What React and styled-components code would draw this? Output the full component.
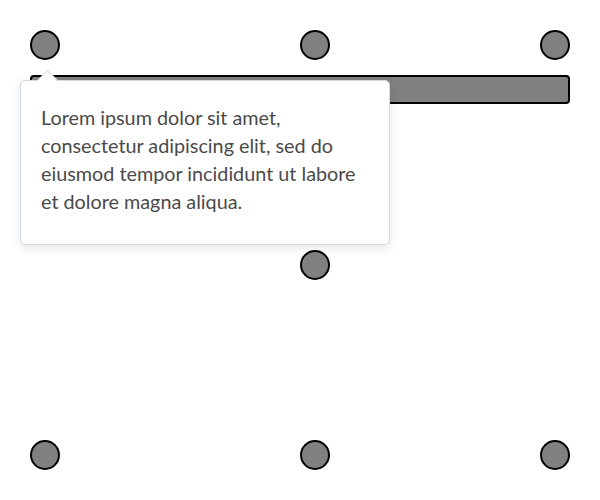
import styled, { createGlobalStyle } from "styled-components";

const GlobalStyle = createGlobalStyle`
  html, body {
    margin: 0;
    padding: 0;
    background: #ffffff;
  }
  body {
    font-family: Lato, "Noto Sans", sans-serif;
  }
`;

const Page = styled.div`
  padding: 30px;
  width: 600px;
  height: 500px;
  box-sizing: border-box;
`;

// free canvas: anchors sit at the corners, edges and middle
const Canvas = styled.div`
  position: relative;
  width: 540px;
  height: 440px;
`;

const Dot = styled.div`
  position: absolute;
  width: 30px;
  height: 30px;
  box-sizing: border-box;
  border: 2px solid #000;
  border-radius: 50%;
  background: #808080;
  left: ${(p) => p.$x};
  top: ${(p) => p.$y};
`;

const Bar = styled.div`
  position: relative;
  top: 45px;
  height: 29px;
  box-sizing: border-box;
  border: 2px solid #000;
  border-radius: 4px;
  background: #808080;
`;

const Tooltip = styled.div`
  position: absolute;
  left: -10px;
  top: 50px;
  width: 370px;
  box-sizing: border-box;
  padding: 22px 20px 29px;
  background: #fff;
  border: 1px solid #d3d9df;
  border-radius: 5px;
  box-shadow: 0 3px 10px rgba(40, 50, 70, 0.12);

  &::before {
    content: "";
    position: absolute;
    top: -8px;
    left: 19px;
    width: 14px;
    height: 14px;
    background: #fff;
    border-top: 1px solid #d3d9df;
    border-left: 1px solid #d3d9df;
    transform: rotate(45deg);
  }
`;

const Text = styled.p`
  position: relative;
  margin: 0;
  font-family: Lato, "Noto Sans", sans-serif;
  font-size: 19.8px;
  line-height: 28px;
  color: #4a4a4a;
`;

const anchors = [
  ["0px", "0px"],
  ["270px", "0px"],
  ["510px", "0px"],
  ["270px", "220px"],
  ["0px", "410px"],
  ["270px", "410px"],
  ["510px", "410px"],
];

const App = () => {
  return (
    <Page>
      <GlobalStyle />
      <Canvas>
        {anchors.map(([x, y], i) => (
          <Dot key={i} $x={x} $y={y} />
        ))}
        <Bar />
        <Tooltip>
          <Text>
            Lorem ipsum dolor sit amet, consectetur adipiscing elit, sed do
            eiusmod tempor incididunt ut labore et dolore magna aliqua.
          </Text>
        </Tooltip>
      </Canvas>
    </Page>
  );
};

export default App;
